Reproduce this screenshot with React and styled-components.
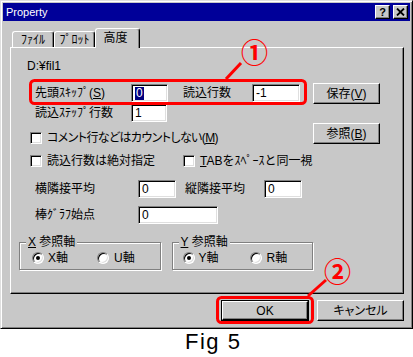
import React from 'react';
import styled, { createGlobalStyle } from 'styled-components';

const FACE = '#c8c8c8';

const GlobalStyle = createGlobalStyle`
  html, body {
    margin: 0;
    padding: 0;
    background: #fff;
  }
  body {
    font-family: "Liberation Sans", "Noto Sans CJK JP", sans-serif;
    font-size: 12px;
    color: #000;
  }
`;

const Page = styled.div`
  position: relative;
  width: 413px;
  height: 357px;
  overflow: hidden;
`;

const Window = styled.div`
  box-sizing: border-box;
  width: 413px;
  background: ${FACE};
  border: 1px solid;
  border-color: #dfdfdf #000 #000 #dfdfdf;
  box-shadow: inset 1px 1px 0 #fff, inset -1px -1px 0 #808080;
  padding: 2px;
  display: flex;
  flex-direction: column;
`;

const TitleBar = styled.div`
  height: 18px;
  background: #000099;
  color: #fff;
  display: flex;
  align-items: center;
  padding: 0 2px 0 3px;
  font-size: 11px;
`;

const TitleText = styled.span`
  flex: 1;
  line-height: 14px;
`;

const TitleButton = styled.div`
  box-sizing: border-box;
  width: 15px;
  height: 14px;
  margin-left: ${p => p.$gap || 0}px;
  background: ${FACE};
  color: #000;
  border: 1px solid;
  border-color: #fff #000 #000 #fff;
  box-shadow: inset -1px -1px 0 #808080;
  display: flex;
  align-items: center;
  justify-content: center;
  font-weight: bold;
  font-size: 11px;
  line-height: 11px;
`;

const Body = styled.div`
  padding: 7px 6px 5px 7px;
  display: flex;
  flex-direction: column;
`;

const TabStrip = styled.div`
  height: 19px;
  display: flex;
  align-items: flex-end;
  padding-left: 2px;
`;

const Tab = styled.div`
  box-sizing: border-box;
  width: ${p => p.$w}px;
  height: ${p => (p.$active ? 20 : 16)}px;
  margin-bottom: ${p => (p.$active ? -1 : 0)}px;
  position: relative;
  z-index: ${p => (p.$active ? 2 : 0)};
  background: ${FACE};
  border-top: 1px solid #fff;
  border-left: 1px solid #fff;
  border-right: 1px solid #000;
  border-radius: 3px 3px 0 0;
  box-shadow: inset -1px 0 0 #808080;
  display: flex;
  align-items: flex-start;
  justify-content: center;
  padding: ${p => (p.$active ? '2px 4px 0 0' : '1px 0 0 0')};
  line-height: 14px;
  white-space: nowrap;
`;

const Panel = styled.div`
  box-sizing: border-box;
  height: 247px;
  position: relative;
  z-index: 1;
  border: 1px solid;
  border-color: #fff #000 #000 #fff;
  box-shadow: inset -1px -1px 0 #808080;
  display: grid;
  grid-template-columns: 302px 67px;
  align-items: start;
`;

const LeftCol = styled.div`
  display: flex;
  flex-direction: column;
`;

const RightCol = styled.div`
  display: flex;
  flex-direction: column;
  padding-top: 35px;
  gap: 19px;
`;

const PathText = styled.div`
  margin: 11px 0 0 16px;
  line-height: 14px;
`;

const Row = styled.div`
  display: flex;
  align-items: center;
  height: ${p => p.$h || 18}px;
  margin-top: ${p => p.$mt || 0}px;
  padding-left: ${p => p.$pl || 24}px;
  white-space: nowrap;
  line-height: 14px;
`;

const Label = styled.span`
  flex: none;
  width: ${p => p.$w}px;
  margin-left: ${p => p.$ml || 0}px;
`;

const U = styled.span`
  text-decoration: underline;
`;

const Prop = styled.span`
  font-feature-settings: "palt";
  letter-spacing: ${p => p.$ls || 0}px;
`;

const Field = styled.div`
  box-sizing: border-box;
  flex: none;
  width: ${p => p.$w}px;
  height: 18px;
  background: #fff;
  border: 1px solid;
  border-color: #808080 #fff #fff #808080;
  box-shadow: inset 1px 1px 0 #000, inset -1px -1px 0 #dfdfdf;
  padding-left: 3px;
  display: flex;
  align-items: center;
  line-height: 14px;
`;

const Selected = styled.span`
  background: #000080;
  color: #fff;
  padding: 0 1px;
  line-height: 13px;
`;

const CheckItem = styled.label`
  display: flex;
  align-items: center;
  flex: none;
  width: ${p => (p.$w ? `${p.$w}px` : 'auto')};
  gap: 5px;
`;

const CheckBox = styled.span`
  box-sizing: border-box;
  width: 12px;
  height: 12px;
  flex: none;
  background: #fff;
  border: 1px solid;
  border-color: #808080 #fff #fff #808080;
  box-shadow: inset 1px 1px 0 #000, inset -1px -1px 0 #dfdfdf;
`;

const Button = styled.div`
  box-sizing: border-box;
  width: ${p => p.$w}px;
  height: ${p => p.$h || 21}px;
  background: ${FACE};
  border: 1px solid;
  border-color: #fff #000 #000 #fff;
  box-shadow: inset -1px -1px 0 #808080;
  display: flex;
  align-items: center;
  justify-content: center;
  line-height: 14px;
  white-space: nowrap;
`;

const DefaultButton = styled.div`
  box-sizing: border-box;
  width: ${p => p.$w}px;
  height: 21px;
  border: 1px solid #000;
  display: flex;
  & > ${Button} {
    flex: 1;
    height: auto;
  }
`;

const GroupRow = styled.div`
  display: flex;
  gap: 11px;
  margin-top: 18px;
  padding-left: 8px;
`;

const GroupBox = styled.div`
  box-sizing: border-box;
  position: relative;
  width: 147px;
  height: 28px;
  border: 1px solid #808080;
  box-shadow: inset 1px 1px 0 #fff, 1px 1px 0 #fff;
  display: flex;
  align-items: center;
  padding-left: ${p => p.$pl}px;
  padding-top: 4px;
`;

const GroupLabel = styled.span`
  position: absolute;
  left: 6px;
  top: -8px;
  background: ${FACE};
  padding: 0 2px;
  line-height: 14px;
`;

const RadioItem = styled.span`
  display: flex;
  align-items: center;
  flex: none;
  width: ${p => (p.$w ? `${p.$w}px` : 'auto')};
  gap: ${p => p.$gap || 4}px;
  line-height: 14px;
`;

const Radio = styled.span`
  box-sizing: border-box;
  width: 12px;
  height: 12px;
  flex: none;
  border-radius: 50%;
  background: #fff;
  border: 1px solid;
  border-color: #808080 #fff #fff #808080;
  box-shadow: inset 1px 1px 0 #000, inset -1px -1px 0 #dfdfdf;
  display: flex;
  align-items: center;
  justify-content: center;
  &::after {
    content: '';
    width: 4px;
    height: 4px;
    border-radius: 50%;
    background: ${p => (p.$on ? '#000' : 'transparent')};
  }
`;

const ButtonRow = styled.div`
  display: flex;
  justify-content: flex-end;
  gap: 8px;
  margin-top: 6px;
`;

const Caption = styled.div`
  margin-top: 2px;
  padding-left: 185px;
  font-family: "Liberation Sans", sans-serif;
  font-size: 22px;
  line-height: 22px;
  letter-spacing: 1.5px;
`;

const Overlay = styled.svg`
  position: absolute;
  left: 0;
  top: 0;
  pointer-events: none;
  z-index: 5;
`;

const Marker = styled.span`
  position: absolute;
  left: ${p => p.$x}px;
  top: ${p => p.$y}px;
  z-index: 6;
  color: #ff0000;
  font-family: "Noto Sans CJK JP", sans-serif;
  font-weight: bold;
  font-size: 27px;
  line-height: 27px;
`;

const CloseGlyph = () => (
  <svg width="9" height="8" viewBox="0 0 9 8">
    <path d="M1 0.5 L8 7.5 M8 0.5 L1 7.5" stroke="#000" strokeWidth="1.8" />
  </svg>
);

export default function App() {
  return (
    <Page>
      <GlobalStyle />
      <Window>
        <TitleBar>
          <TitleText>Property</TitleText>
          <TitleButton>?</TitleButton>
          <TitleButton $gap={3}><CloseGlyph /></TitleButton>
        </TitleBar>
        <Body>
          <TabStrip>
            <Tab $w={42}>ﾌｧｲﾙ</Tab>
            <Tab $w={41}>ﾌﾟﾛｯﾄ</Tab>
            <Tab $w={45} $active>高度</Tab>
          </TabStrip>
          <Panel>
            <LeftCol>
              <PathText>D:¥fil1</PathText>
              <Row $mt={11}>
                <Label $w={96}>先頭ｽｷｯﾌﾟ(<U>S</U>)</Label>
                <Field $w={37}><Selected>0</Selected></Field>
                <Label $w={69} $ml={15}>読込行数</Label>
                <Field $w={48}>-1</Field>
              </Row>
              <Row $mt={2}>
                <Label $w={96}>読込ｽﾃｯﾌﾟ行数</Label>
                <Field $w={36}>1</Field>
              </Row>
              <Row $mt={9} $h={14} $pl={19}>
                <CheckItem>
                  <CheckBox />
                  <Prop $ls={-0.6}>コメント行などはカウントしない(<U>M</U>)</Prop>
                </CheckItem>
              </Row>
              <Row $mt={9} $h={14} $pl={19}>
                <CheckItem $w={153}>
                  <CheckBox />
                  <span>読込行数は絶対指定</span>
                </CheckItem>
                <CheckItem>
                  <CheckBox />
                  <span><U>T</U>ABをｽﾍﾟｰｽと同一視</span>
                </CheckItem>
              </Row>
              <Row $mt={12}>
                <Label $w={103}>横隣接平均</Label>
                <Field $w={38}>0</Field>
                <Label $w={79} $ml={9}>縦隣接平均</Label>
                <Field $w={38}>0</Field>
              </Row>
              <Row $mt={8}>
                <Label $w={103}>棒ｸﾞﾗﾌ始点</Label>
                <Field $w={80}>0</Field>
              </Row>
              <GroupRow>
                <GroupBox $pl={12}>
                  <GroupLabel><U>X</U> 参照軸</GroupLabel>
                  <RadioItem $w={65}><Radio $on />X軸</RadioItem>
                  <RadioItem $gap={5}><Radio />U軸</RadioItem>
                </GroupBox>
                <GroupBox $pl={10}>
                  <GroupLabel><U>Y</U> 参照軸</GroupLabel>
                  <RadioItem $w={67}><Radio $on />Y軸</RadioItem>
                  <RadioItem $gap={5}><Radio />R軸</RadioItem>
                </GroupBox>
              </GroupRow>
            </LeftCol>
            <RightCol>
              <Button $w={67} $h={21}>保存(<U>V</U>)</Button>
              <Button $w={67} $h={21}>参照(<U>B</U>)</Button>
            </RightCol>
          </Panel>
          <ButtonRow>
            <DefaultButton $w={88}><Button>OK</Button></DefaultButton>
            <Button $w={87}><Prop>キャンセル</Prop></Button>
          </ButtonRow>
        </Body>
      </Window>
      <Caption>Fig 5</Caption>

      <Overlay width="413" height="357" viewBox="0 0 413 357">
        <rect x="30.5" y="80.5" width="275" height="23" rx="4" fill="none" stroke="#ff0000" strokeWidth="3" />
        <line x1="241" y1="63" x2="226" y2="79" stroke="#ff0000" strokeWidth="3" />
        <rect x="217.5" y="297.5" width="95" height="25" rx="4" fill="none" stroke="#ff0000" strokeWidth="3" />
        <line x1="326" y1="280" x2="308" y2="296" stroke="#ff0000" strokeWidth="3" />
      </Overlay>
      <Marker $x={241} $y={38}>①</Marker>
      <Marker $x={324} $y={257}>②</Marker>
    </Page>
  );
}
